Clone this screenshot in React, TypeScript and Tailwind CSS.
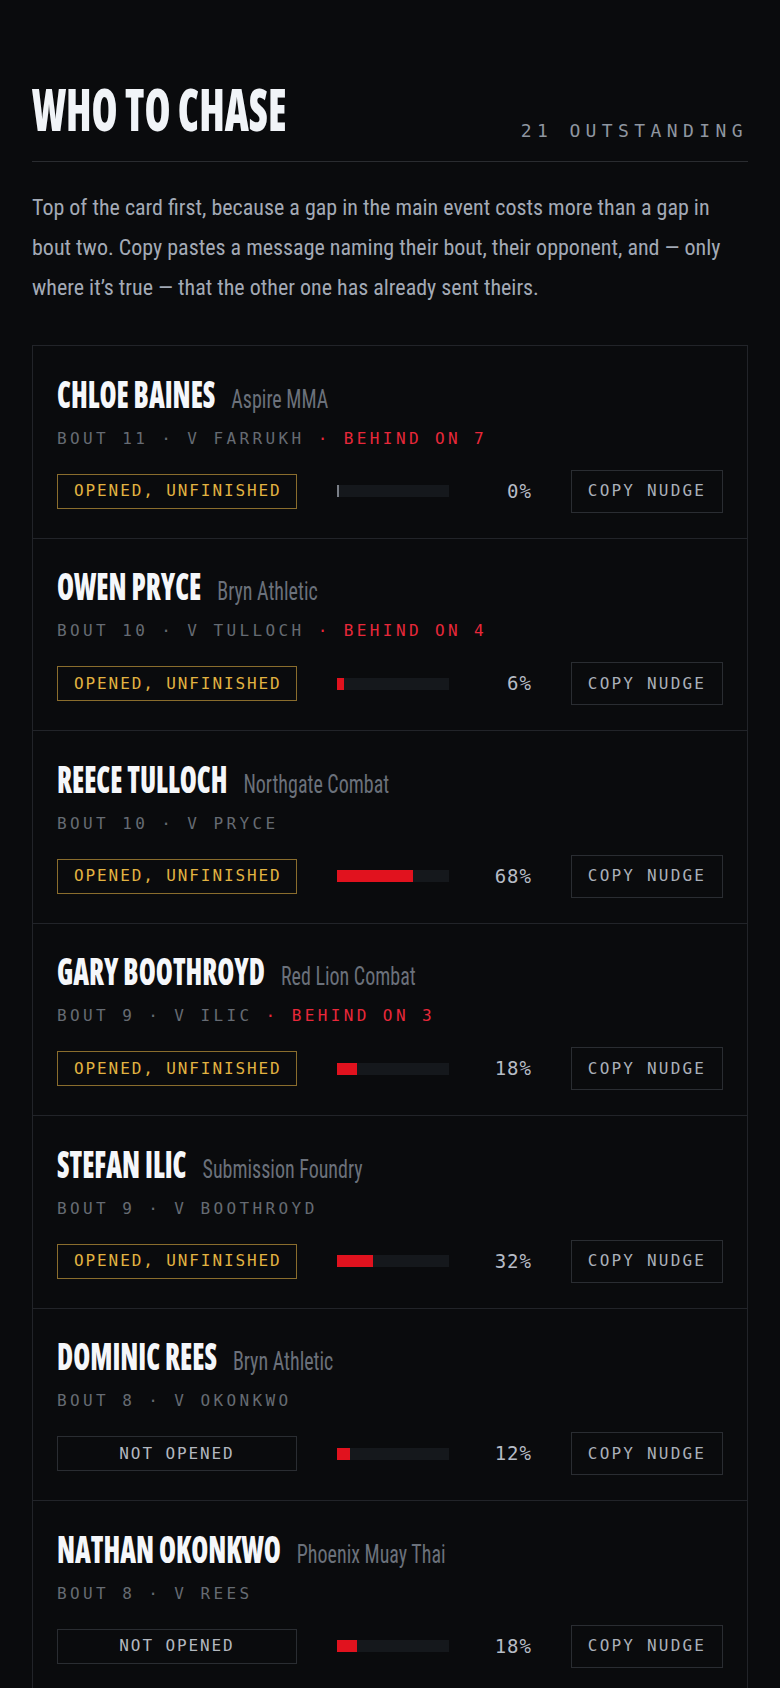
type Nudge = {
  name: string;
  club: string;
  bout: number;
  opponent: string;
  behind?: number;
  status: "opened" | "not_opened";
  pct: number;
};

const nudges: Nudge[] = [
  { name: "Chloe Baines", club: "Aspire MMA", bout: 11, opponent: "Farrukh", behind: 7, status: "opened", pct: 0 },
  { name: "Owen Pryce", club: "Bryn Athletic", bout: 10, opponent: "Tulloch", behind: 4, status: "opened", pct: 6 },
  { name: "Reece Tulloch", club: "Northgate Combat", bout: 10, opponent: "Pryce", status: "opened", pct: 68 },
  { name: "Gary Boothroyd", club: "Red Lion Combat", bout: 9, opponent: "Ilic", behind: 3, status: "opened", pct: 18 },
  { name: "Stefan Ilic", club: "Submission Foundry", bout: 9, opponent: "Boothroyd", status: "opened", pct: 32 },
  { name: "Dominic Rees", club: "Bryn Athletic", bout: 8, opponent: "Okonkwo", status: "not_opened", pct: 12 },
  { name: "Nathan Okonkwo", club: "Phoenix Muay Thai", bout: 8, opponent: "Rees", status: "not_opened", pct: 18 },
  { name: "Kyle Marsh", club: "Ironbridge BJJ", bout: 7, opponent: "Adeyemi", status: "not_opened", pct: 0 },
];

// condensed widths of the installed variable faces
const display = "font-['Open_Sans',sans-serif] [font-stretch:75%] font-extrabold";
const body = "font-['Roboto',sans-serif] [font-stretch:75%]";
const mono = "font-['DejaVu_Sans_Mono','Liberation_Mono',monospace]";

function NudgeRow({ n }: { n: Nudge }) {
  return (
    <li className="px-6 pt-[36.5px] pb-[25px]">
      <div className="flex items-baseline gap-4">
        <span className={`${display} inline-block origin-[0_26px] scale-y-[1.32] text-[27.5px] leading-[30px] uppercase whitespace-nowrap text-[#f5f7fa]`}>
          {n.name}
        </span>
        <span className={`${body} inline-block origin-[0_23px] scale-y-[1.3] text-[20px] leading-[30px] whitespace-nowrap text-[#6b717b]`}>
          {n.club}
        </span>
      </div>
      <div className={`${mono} mt-[13px] text-[16px] leading-[20px] tracking-[3.4px] uppercase text-[#666b73]`}>
        Bout {n.bout} · v {n.opponent}
        {n.behind !== undefined && <span className="text-[#e8283a]"> · Behind on {n.behind}</span>}
      </div>
      <div className="mt-[21px] flex items-center">
        {n.status === "opened" ? (
          <span className={`${mono} w-[240px] h-[35px] flex items-center px-4 whitespace-nowrap border border-[#8a6d2d] text-[16px] tracking-[1.9px] text-[#e2b341]`}>
            OPENED, UNFINISHED
          </span>
        ) : (
          <span className={`${mono} w-[240px] h-[35px] flex items-center justify-center whitespace-nowrap border border-[#2a2d32] text-[16px] tracking-[1.9px] text-[#b3b8c0]`}>
            NOT OPENED
          </span>
        )}
        <div className="ml-10 w-[112px] h-3 bg-[#15181c]">
          {n.pct === 0 ? (
            <div className="h-full w-[2px] bg-[#7a7f87]" />
          ) : (
            <div className="h-full bg-[#e1121e]" style={{ width: `${n.pct}%` }} />
          )}
        </div>
        <span className={`${mono} w-[83px] text-right text-[19px] tracking-[1px] text-[#b6bcc6]`}>{n.pct}%</span>
        <button className={`${mono} ml-auto w-[152px] h-[43px] border border-[#2a2d32] text-[16px] tracking-[2.2px] text-[#aab0b9]`}>
          COPY NUDGE
        </button>
      </div>
    </li>
  );
}

export default function App() {
  return (
    <div className="min-h-screen bg-[#0a0b0d] px-8 pt-[87px] pb-16">
      <div className="flex items-end justify-between border-b border-[#2a2c30] pb-[18px]">
        <h1 className={`${display} inline-block origin-[0_44px] scale-y-[1.4] text-[42px] leading-[56px] uppercase text-[#f1f4f8]`}>
          Who to chase
        </h1>
        <span className={`${mono} text-[18px] leading-[24px] tracking-[0.3em] text-[#8f96a0]`}>21 OUTSTANDING</span>
      </div>

      <p className={`${body} mt-[26px] text-[22px] leading-[40px] text-[#a3aab6]`}>
        Top of the card first, because a gap in the main event costs more than a gap in
        <br />
        bout two. Copy pastes a message naming their bout, their opponent, and — only
        <br />
        where it’s true — that the other one has already sent theirs.
      </p>

      <ul className="mt-[37px] border border-[#222429] divide-y divide-[#222429]">
        {nudges.map((n) => (
          <NudgeRow key={n.name} n={n} />
        ))}
      </ul>
    </div>
  );
}
